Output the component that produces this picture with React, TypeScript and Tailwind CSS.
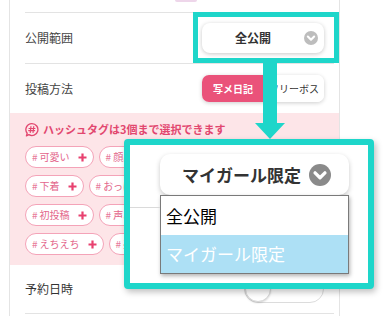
import React from 'react';

const FONT = { fontFamily: '"Noto Sans CJK JP", "Noto Sans", sans-serif' };

const ChevronCircle = ({ size, color }: { size: number; color: string }) => (
  <svg width={size} height={size} viewBox="0 0 20 20">
    <circle cx="10" cy="10" r="10" fill={color} />
    <polyline
      points="5.5,8 10,12.5 14.5,8"
      fill="none"
      stroke="#fff"
      strokeWidth={3}
      strokeLinecap="round"
      strokeLinejoin="round"
    />
  </svg>
);

const HashBubble = () => (
  <svg width="14" height="16" viewBox="0 0 16 17">
    <path
      d="M8 1.2a6.8 6.8 0 1 1-3.6 12.6L1.6 15.2l.9-3A6.8 6.8 0 0 1 8 1.2z"
      fill="none"
      stroke="#e2476f"
      strokeWidth={1.5}
      strokeLinejoin="round"
    />
    <path
      d="M6.8 4.6 6 11.4M10 4.6l-.8 6.8M4.6 6.8h6.8M4.2 9.2h6.8"
      stroke="#e2476f"
      strokeWidth={1.3}
      strokeLinecap="round"
    />
  </svg>
);

const Plus = () => (
  <svg width="9" height="9" viewBox="0 0 9 9">
    <path d="M4.5 0.5v8M0.5 4.5h8" stroke="#e8416f" strokeWidth={2.2} />
  </svg>
);

const Tag = ({ label }: { label: string }) => (
  <div className="flex h-[22px] shrink-0 items-center rounded-full border border-[#f4a3b8] bg-white px-[6px]">
    <span className="text-[10px] leading-none text-[#e8799a]">#</span>
    <span className="ml-[2px] text-[10px] leading-none text-[#e3668b]">{label}</span>
    <span className="ml-[8px] flex items-center">
      <Plus />
    </span>
  </div>
);

// second column sits mostly under the zoom callout
const TAG_ROWS = [
  ['可愛い', '顔出し'],
  ['下着', 'おっぱい'],
  ['初投稿', '声あり'],
  ['えちえち', '美乳'],
];

export default function App() {
  return (
    <div className="relative h-[316px] w-[383px] overflow-hidden bg-white" style={FONT}>
      {/* form card */}
      <div className="ml-[9px] flex h-full w-[331px] flex-col border-x border-[#e4e4e4]">
        <div className="ml-[15px] mr-[5px] h-[13px] border-b border-[#e3e3e3] pl-[150px]">
          <div className="h-[2px] w-[22px] rounded-b bg-[#eed6ea]" />
        </div>

        <div className="ml-[15px] mr-[5px] flex h-[51px] items-center justify-between border-b border-[#e3e3e3] pr-[10px]">
          <span className="text-[12px] text-[#444]">公開範囲</span>
          <div className="flex h-[30px] w-[122px] items-center rounded-[8px] bg-white pr-[6px] shadow-[0_1px_4px_rgba(0,0,0,0.22)]">
            <span className="flex-1 text-center text-[12px] font-bold text-[#333]">全公開</span>
            <ChevronCircle size={14} color="#bdbdbd" />
          </div>
        </div>

        <div className="ml-[15px] mr-[5px] flex h-[49px] items-center justify-between pr-[10px]">
          <span className="text-[12px] text-[#444]">投稿方法</span>
          <div className="flex h-[27px] w-[122px] overflow-hidden rounded-[7px] shadow-[0_1px_4px_rgba(0,0,0,0.2)]">
            <div className="flex w-[62px] items-center justify-center bg-[#ea527a] text-[10px] font-bold text-white">
              写メ日記
            </div>
            <div className="flex flex-1 items-center justify-center bg-white text-[10px] text-[#333]">
              フリーボス
            </div>
          </div>
        </div>

        <div className="h-[152px] bg-[#fde5e8] pl-[15px] pt-[8px]">
          <div className="flex h-[17px] items-center gap-[4px]">
            <HashBubble />
            <span className="text-[11px] font-bold text-[#e2476f]">ハッシュタグは3個まで選択できます</span>
          </div>
          <div className="mt-[8px] flex flex-col gap-[7px]">
            {TAG_ROWS.map((row, i) => (
              <div key={i} className="flex gap-[5px] overflow-hidden">
                {row.map((t) => (
                  <Tag key={t} label={t} />
                ))}
              </div>
            ))}
          </div>
        </div>

        <div className="ml-[15px] mr-[5px] flex h-[49px] items-center justify-between border-b border-[#e3e3e3] pr-[10px]">
          <span className="text-[12px] text-[#333]">予約日時</span>
          <div className="flex h-[28px] w-[80px] items-center rounded-full border border-[#dcdcdc] bg-white">
            <div className="h-[26px] w-[26px] rounded-full border border-[#d6d6d6] bg-white shadow-[0_1px_2px_rgba(0,0,0,0.15)]" />
          </div>
        </div>
      </div>

      {/* annotation: highlight box */}
      <div className="absolute left-[193px] top-[12px] h-[51px] w-[146px] border-[5px] border-[#1ed6ca]" />

      {/* annotation: arrow */}
      <svg className="absolute left-[255px] top-[62px]" width="30" height="77" viewBox="0 0 30 77">
        <rect x="8" y="0" width="14" height="62" fill="#1ed6ca" />
        <polygon points="0,61 30,61 15,77" fill="#1ed6ca" />
      </svg>

      {/* annotation: zoomed dropdown */}
      <div className="absolute left-[124px] top-[139px] h-[150px] w-[250px] rounded-[4px] border-[6px] border-[#1ed6ca] bg-white shadow-[2px_3px_6px_rgba(0,0,0,0.25)]">
        <div className="absolute left-0 top-[62px] h-px w-[30px] bg-[#dadada]" />
        <div className="flex flex-col pl-[30px] pt-[9px]">
          <div className="flex h-[41px] w-[189px] items-center rounded-[10px] bg-white pl-[14px] pr-[18px] shadow-[0_2px_5px_rgba(0,0,0,0.22)]">
            <span className="flex-1 text-center text-[17px] font-bold text-[#333]">マイガール限定</span>
            <ChevronCircle size={22} color="#8a8a8a" />
          </div>
          <div className="flex w-[189px] flex-col border border-[#7a7a7a] bg-white shadow-[1px_2px_4px_rgba(0,0,0,0.3)]">
            <div className="flex h-[39px] items-center pl-[5px] text-[17px] text-black">全公開</div>
            <div className="flex h-[38px] items-center bg-[#ade0f5] pl-[5px] text-[17px] text-white">マイガール限定</div>
          </div>
        </div>
      </div>
    </div>
  );
}
